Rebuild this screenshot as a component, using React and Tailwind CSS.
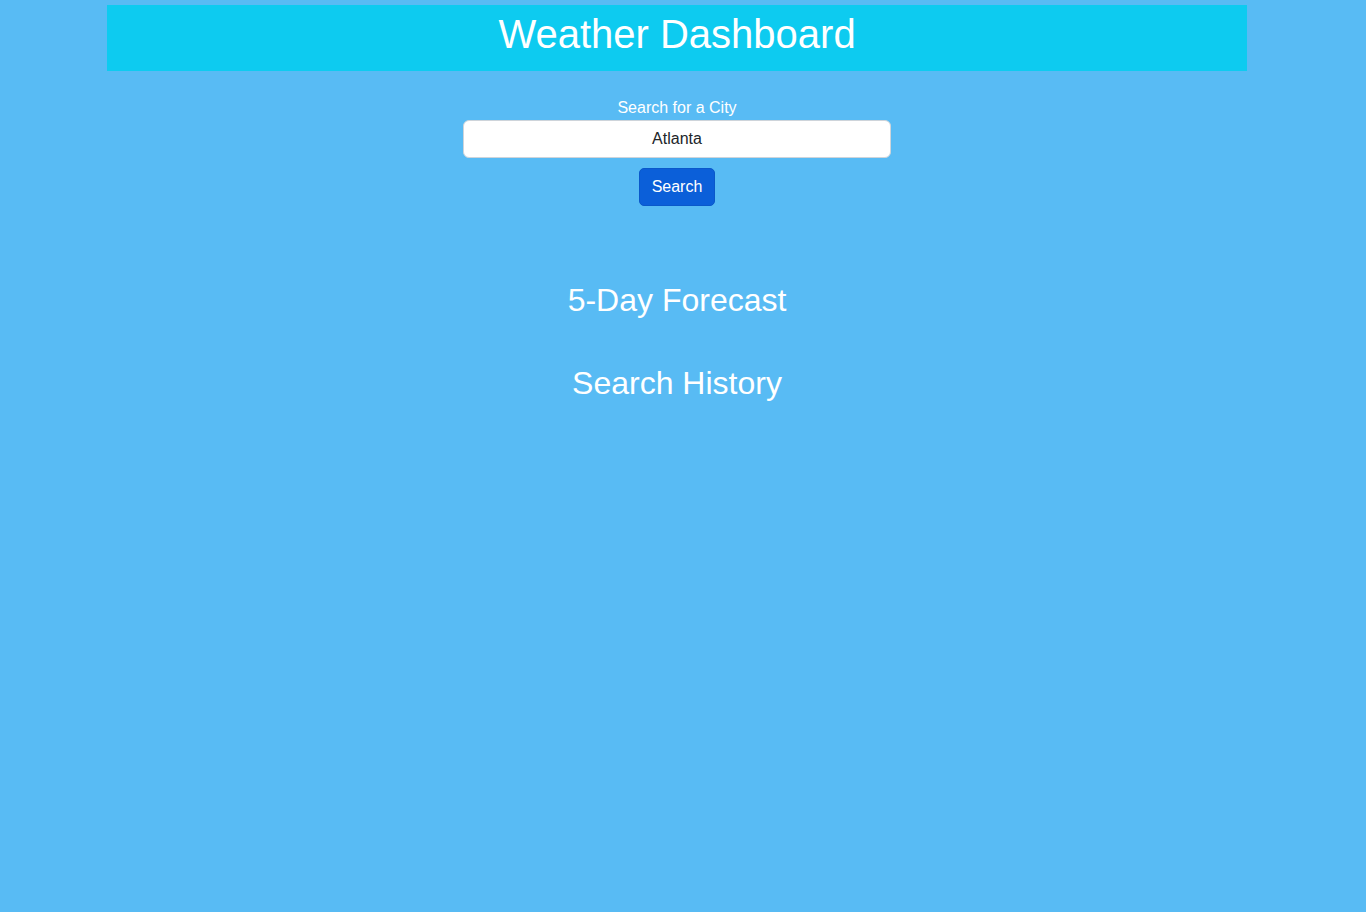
import React, { useState } from 'react';

const App = () => {
  const [city, setCity] = useState('Atlanta');

  return (
    <div className="min-h-[912px] bg-[#58bbf4] font-['Liberation_Sans',Arial,sans-serif] text-white">
      <div className="ml-[107px] w-[1140px] pt-[5px]">
        {/* Header */}
        <header className="h-[66px] bg-[#0dcbf0] text-center">
          <h1 className="text-[40px] leading-[58px]">Weather Dashboard</h1>
        </header>

        {/* Search */}
        <div className="mt-[25px] flex flex-col items-center">
          <label className="text-[16px] leading-[24px]">Search for a City</label>
          <input
            type="text"
            value={city}
            onChange={(e) => setCity(e.target.value)}
            className="h-[38px] w-[428px] rounded-[6px] border border-[#ced4da] bg-white px-3 text-center text-[16px] text-[#212529] outline-none"
          />
          <button className="mt-[10px] h-[38px] w-[76px] rounded-[5px] border border-[#0a58ca] bg-[#0b5fd9] text-[16px] text-white">
            Search
          </button>
        </div>

        {/* Forecast & history */}
        <h2 className="mt-[75px] text-center text-[32px] leading-[38px]">5-Day Forecast</h2>
        <h2 className="mt-[45px] text-center text-[32px] leading-[38px]">Search History</h2>
      </div>
    </div>
  );
};

export default App;
